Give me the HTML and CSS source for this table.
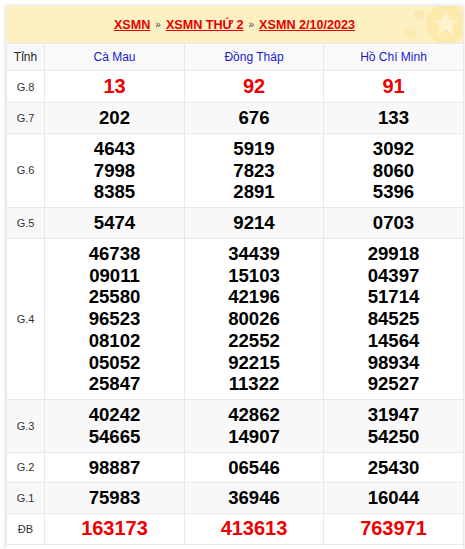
FILE: index.html
```html
<!DOCTYPE html>
<html lang="vi">
<head>
<meta charset="utf-8">
<link rel="stylesheet" href="styles.css">
</head>
<body>
<div class="box">
  <div class="title">
    <a href="#">XSMN</a> <span class="sep">»</span> <a href="#">XSMN THỨ 2</a> <span class="sep">»</span> <a href="#">XSMN 2/10/2023</a>
    <svg class="deco" width="80" height="37" viewBox="0 0 80 37">
      <circle cx="63" cy="18" r="20" fill="#fde7a6" opacity="0.8"/>
      <polygon points="63,5 67,14 76,14 69,20 72,30 63,24 54,30 57,20 50,14 59,14" fill="#fff3cf" opacity="0.9"/>
      <circle cx="36" cy="9" r="5" fill="#fbe3a4" opacity="0.6"/>
      <circle cx="27" cy="27" r="6" fill="#fbe3a4" opacity="0.5"/>
    </svg>
  </div>
  <table class="kq">
    <colgroup><col class="c0"><col class="c1"><col class="c2"><col class="c3"></colgroup>
    <tr class="head"><th>Tỉnh</th><th>Cà Mau</th><th>Đồng Tháp</th><th>Hồ Chí Minh</th></tr>
    <tr class="g8"><td class="lb">G.8</td><td class="red big">13</td><td class="red big">92</td><td class="red big">91</td></tr>
    <tr class="alt"><td class="lb">G.7</td><td>202</td><td>676</td><td>133</td></tr>
    <tr><td class="lb">G.6</td><td>4643<br>7998<br>8385</td><td>5919<br>7823<br>2891</td><td>3092<br>8060<br>5396</td></tr>
    <tr class="alt"><td class="lb">G.5</td><td>5474</td><td>9214</td><td>0703</td></tr>
    <tr><td class="lb">G.4</td><td>46738<br>09011<br>25580<br>96523<br>08102<br>05052<br>25847</td><td>34439<br>15103<br>42196<br>80026<br>22552<br>92215<br>11322</td><td>29918<br>04397<br>51714<br>84525<br>14564<br>98934<br>92527</td></tr>
    <tr class="alt"><td class="lb">G.3</td><td>40242<br>54665</td><td>42862<br>14907</td><td>31947<br>54250</td></tr>
    <tr><td class="lb">G.2</td><td>98887</td><td>06546</td><td>25430</td></tr>
    <tr class="alt"><td class="lb">G.1</td><td>75983</td><td>36946</td><td>16044</td></tr>
    <tr class="db"><td class="lb">ĐB</td><td class="red big">163173</td><td class="red big">413613</td><td class="red big">763971</td></tr>
  </table>
</div>
</body>
</html>
```

FILE: styles.css
```css
html, body { margin: 0; padding: 0; background: #fff; }
body { font-family: "Liberation Sans", Arial, sans-serif; }
.box {
  margin: 6px 0 0 6px;
  width: 457px;
  background: #fff;
  box-shadow: 0 0 4px rgba(0,0,0,0.18);
  padding-bottom: 6px;
}
.title {
  position: relative;
  height: 37px;
  background: #fdf0c2;
  display: flex;
  align-items: center;
  justify-content: center;
  gap: 5px;
  font-size: 12.6px;
  font-weight: bold;
  overflow: hidden;
}
.title a { color: #e60000; text-decoration: underline; position: relative; z-index: 1; }
.title .sep { color: #444; font-size: 10px; font-weight: normal; position: relative; z-index: 1; }
.deco { position: absolute; right: 0; top: 0; }
.kq { border-collapse: collapse; width: 457px; table-layout: fixed; }
.c0 { width: 38px; } .c1 { width: 140px; } .c2 { width: 139px; } .c3 { width: 140px; }
.kq th, .kq td {
  border: 1px solid #e9e9e9;
  text-align: center;
  vertical-align: middle;
}
.kq th {
  font-size: 12px;
  font-weight: normal;
  color: #1a1acc;
  height: 26px;
  padding: 0;
  background: #f9f9f9;
}
.kq th:first-child { color: #222; }
.kq td {
  font-size: 18.6px;
  font-weight: bold;
  color: #000;
  line-height: 21.75px;
  padding: 4px 0;
}
.kq td.lb { font-size: 11px; font-weight: normal; color: #333; line-height: 14px; }
.kq tr.alt td { background: #f8f8f8; }
.kq td.red { color: #ee0000; }
.kq td.big { font-size: 20px; }
.kq tr.g8 td { height: 23px; }
.kq tr.db td { height: 21px; }
```
